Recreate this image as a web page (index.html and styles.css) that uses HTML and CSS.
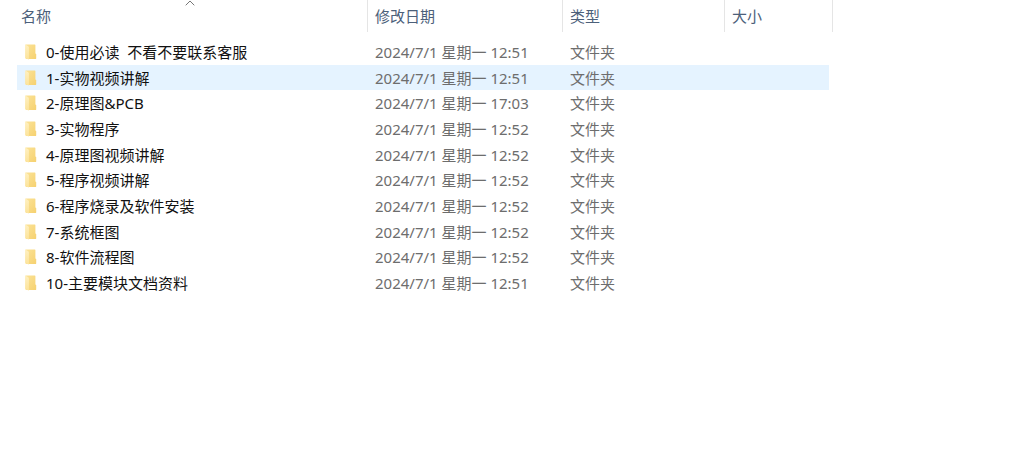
FILE: index.html
```html
<!DOCTYPE html>
<html lang="zh-CN">
<head>
<meta charset="utf-8">
<title>文件夹</title>
<link rel="stylesheet" href="styles.css">
</head>
<body>
<svg class="defs" aria-hidden="true">
  <defs>
    <linearGradient id="back" x1="0" y1="0" x2="1" y2="1">
      <stop offset="0" stop-color="#fbe397"/>
      <stop offset="1" stop-color="#f6d170"/>
    </linearGradient>
    <linearGradient id="front" x1="0" y1="0" x2="0" y2="1">
      <stop offset="0" stop-color="#fff0c0"/>
      <stop offset="1" stop-color="#fce39a"/>
    </linearGradient>
    <symbol id="folder" viewBox="0 0 12 16">
      <path d="M0.5 0.4H9.8Q10.4 0.4 10.4 1V9.4L11.2 10V14.6Q11.2 15 10.8 15H1.5L0.5 14.2Z" fill="url(#back)"/>
      <path d="M0.3 0.4L3.2 2.2Q3.9 2.7 3.9 3.5V15.6L0.9 14.6Q0.3 14.4 0.3 13.8Z" fill="url(#front)"/>
    </symbol>
  </defs>
</svg>
<main class="explorer">
  <table class="files">
    <colgroup><col class="col-name"><col class="col-date"><col class="col-type"><col class="col-size"></colgroup>
    <thead>
      <tr>
        <th scope="col" aria-sort="ascending"><button class="head head-name" type="button">名称<svg class="sort" viewBox="0 0 10 6" aria-hidden="true"><path d="M0.7 5.3L5 1L9.3 5.3"/></svg></button></th>
        <th scope="col"><button class="head" type="button">修改日期</button></th>
        <th scope="col"><button class="head" type="button">类型</button></th>
        <th scope="col"><button class="head head-size" type="button">大小</button></th>
      </tr>
    </thead>
    <tbody>
      <tr><td class="name"><svg class="icon"><use href="#folder"/></svg>0-使用必读&nbsp; 不看不要联系客服</td><td>2024/7/1 星期一 12:51</td><td>文件夹</td><td></td></tr>
      <tr class="active"><td class="name"><svg class="icon"><use href="#folder"/></svg>1-实物视频讲解</td><td>2024/7/1 星期一 12:51</td><td>文件夹</td><td></td></tr>
      <tr><td class="name"><svg class="icon"><use href="#folder"/></svg>2-原理图&amp;PCB</td><td>2024/7/1 星期一 17:03</td><td>文件夹</td><td></td></tr>
      <tr><td class="name"><svg class="icon"><use href="#folder"/></svg>3-实物程序</td><td>2024/7/1 星期一 12:52</td><td>文件夹</td><td></td></tr>
      <tr><td class="name"><svg class="icon"><use href="#folder"/></svg>4-原理图视频讲解</td><td>2024/7/1 星期一 12:52</td><td>文件夹</td><td></td></tr>
      <tr><td class="name"><svg class="icon"><use href="#folder"/></svg>5-程序视频讲解</td><td>2024/7/1 星期一 12:52</td><td>文件夹</td><td></td></tr>
      <tr><td class="name"><svg class="icon"><use href="#folder"/></svg>6-程序烧录及软件安装</td><td>2024/7/1 星期一 12:52</td><td>文件夹</td><td></td></tr>
      <tr><td class="name"><svg class="icon"><use href="#folder"/></svg>7-系统框图</td><td>2024/7/1 星期一 12:52</td><td>文件夹</td><td></td></tr>
      <tr><td class="name"><svg class="icon"><use href="#folder"/></svg>8-软件流程图</td><td>2024/7/1 星期一 12:52</td><td>文件夹</td><td></td></tr>
      <tr><td class="name"><svg class="icon"><use href="#folder"/></svg>10-主要模块文档资料</td><td>2024/7/1 星期一 12:51</td><td>文件夹</td><td></td></tr>
    </tbody>
  </table>
</main>
</body>
</html>
```
FILE: styles.css
```css
body {
  margin: 0;
  background: #fff;
  color: #6d6d6d;
  font: 15px/24px "Noto Sans", "Noto Sans CJK SC", sans-serif;
}

.defs {
  position: absolute;
  width: 0;
  height: 0;
}

.explorer {
  padding-left: 17px;
}

/* The rows share the height left under the header. */
.files {
  table-layout: fixed;
  width: 812px;
  height: 296px;
  border-collapse: collapse;
  white-space: nowrap;
}

.col-name { width: 350px; }
.col-date { width: 195px; }
.col-type { width: 162px; }

th {
  height: 32px;
  padding: 0 0 7px;
  font-weight: normal;
}

.head {
  display: block;
  position: relative;
  box-sizing: border-box;
  width: 100%;
  height: 32px;
  padding: 0 7px;
  border: 0;
  border-left: 1px solid #e5e5e5;
  background: none;
  color: #4c607a;
  font: inherit;
  text-align: left;
}

.head-name {
  width: calc(100% + 4px);
  margin-left: -4px;
  border-left: 0;
  padding-left: 8px;
}

.head-size {
  width: calc(100% + 4px);
  border-right: 1px solid #e5e5e5;
}

.sort {
  position: absolute;
  top: 0;
  left: calc(50% - 5px);
  width: 10px;
  height: 6px;
  fill: none;
  stroke: #777;
}

td {
  padding: 0 0 0 8px;
}

.name {
  color: #111;
}

.icon {
  width: 12px;
  height: 16px;
  margin-right: 9px;
  vertical-align: -2px;
}

.active {
  background: #e5f3ff;
}
```
